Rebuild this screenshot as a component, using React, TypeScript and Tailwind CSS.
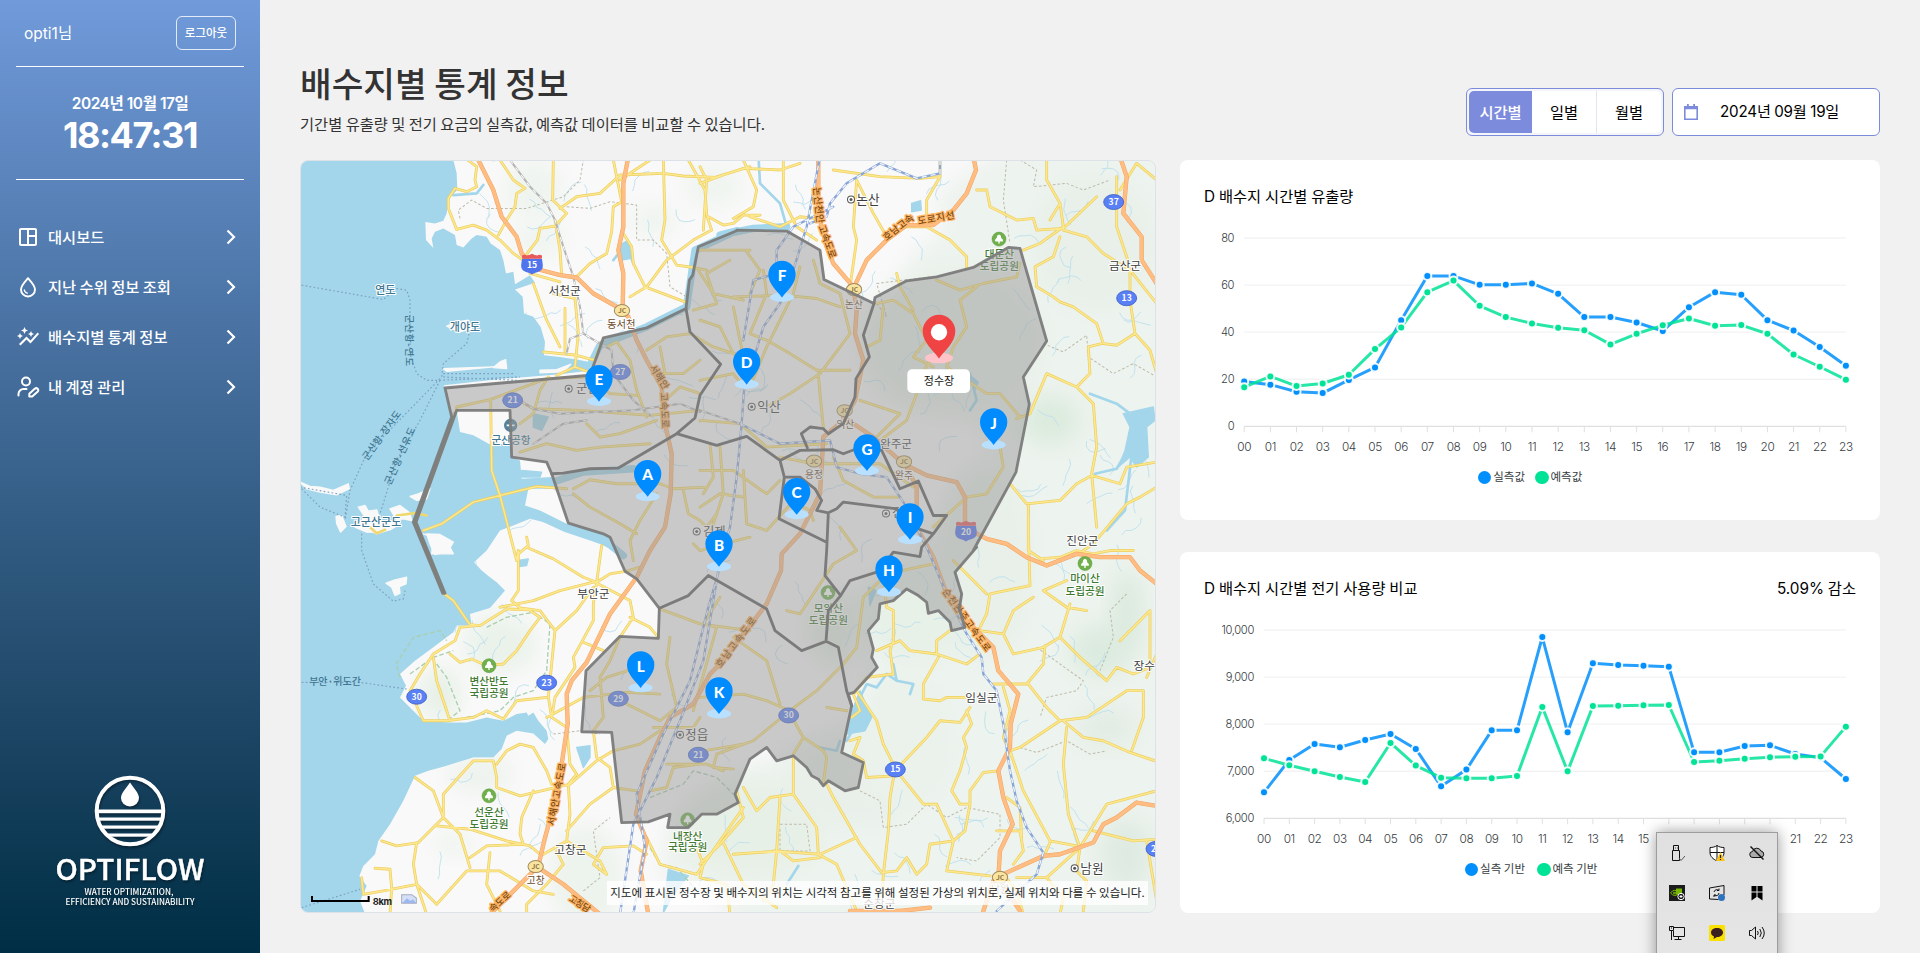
import React from "react";
import { MdAutoGraph, MdOutlineSpaceDashboard } from "react-icons/md";

const KR = "font-['Noto_Sans_CJK_KR',sans-serif]";
const MIX = "font-['Inter','Noto_Sans_CJK_KR',sans-serif]";

/* ---------- sidebar ---------- */

const DropIcon = () => (
  <svg viewBox="0 0 24 24" className="size-6" fill="none" stroke="currentColor" strokeWidth="1.9" strokeLinecap="round" strokeLinejoin="round">
    <path d="M12 3.2c-2.6 3-7 7.2-7 11.3a7 7 0 0 0 14 0C19 10.400 14.600 6.200 12 3.200z" />
    <path d="M8.300 14.800a3.700 3.700 0 0 0 3 3.300" strokeWidth="1.300" />
  </svg>
);

const UserEditIcon = () => (
  <svg viewBox="0 0 24 24" className="size-6" fill="none" stroke="currentColor" strokeWidth="2" strokeLinecap="round" strokeLinejoin="round">
    <circle cx="10" cy="6.500" r="4" />
    <path d="M2.500 20.500v-1.500a5 5 0 0 1 5-5h3" />
    <path d="M13.300 21.600v-2.800l5.700-5.200a2 2 0 0 1 2.800 2.800l-5.600 5.200z" />
  </svg>
);

const menu = [
  { label: "대시보드", icon: <MdOutlineSpaceDashboard className="size-6" /> },
  { label: "지난 수위 정보 조회", icon: <DropIcon /> },
  { label: "배수지별 통계 정보", icon: <MdAutoGraph className="size-6" /> },
  { label: "내 계정 관리", icon: <UserEditIcon /> },
];

const Logo = () => (
  <svg viewBox="0 0 160 140" className="h-[140px] w-[160px] drop-shadow-[1px_2px_1px_rgba(0,0,0,0.35)]">
    <defs>
      <clipPath id="disc"><circle cx="80" cy="40" r="34" /></clipPath>
    </defs>
    <circle cx="80" cy="40" r="33.300" fill="none" stroke="#fff" strokeWidth="4" />
    <path d="M80 11.500c-3.500 5.500-9 10.500-9 15.500a9 8.500 0 0 0 18 0c0-5-5.500-10-9-15.500z" fill="#fff" />
    <g clipPath="url(#disc)" fill="#fff">
      <rect x="45" y="38.500" width="70" height="3.700" />
      <rect x="45" y="46.500" width="70" height="3.200" />
      <rect x="45" y="54.500" width="70" height="3.200" />
      <rect x="45" y="62.500" width="70" height="3.200" />
    </g>
    <text x="80" y="108.500" textAnchor="middle" textLength="149" lengthAdjust="spacingAndGlyphs" fontFamily="'Noto Sans CJK KR'" fontWeight="500" fontSize="28" fill="#fff" stroke="#fff" strokeWidth=".4">OPTIFLOW</text>
    <text x="79" y="123.500" textAnchor="middle" textLength="89" lengthAdjust="spacingAndGlyphs" fontFamily="'Noto Sans CJK KR'" fontWeight="500" fontSize="8.500" fill="#fff">WATER OPTIMIZATION,</text>
    <text x="80" y="133.500" textAnchor="middle" textLength="129" lengthAdjust="spacingAndGlyphs" fontFamily="'Noto Sans CJK KR'" fontWeight="500" fontSize="8.500" fill="#fff">EFFICIENCY AND SUSTAINABILITY</text>
  </svg>
);

const Sidebar = () => (
  <aside className="flex h-full w-[260px] shrink-0 flex-col bg-linear-to-b from-[#709ada] to-[#002e44] px-4 text-white">
    <div className="flex h-[67px] items-center justify-between border-b border-white pr-2 pl-2">
      <span className={`${MIX} pt-[2px] text-[15.5px]`}>opti1님</span>
      <button className={`${KR} h-[34px] w-[60px] rounded-md border border-white/80 pb-px text-[11.5px] font-medium`}>로그아웃</button>
    </div>
    <div className="flex h-[113px] flex-col items-center border-b border-white pt-[25px]">
      <span className={`${MIX} text-[15.5px] leading-6 font-semibold tracking-[-0.45px]`}>2024년 10월 17일</span>
      <span className={`${MIX} -mt-[2px] text-[36px] leading-[42px] font-bold tracking-[-1.5px]`}>18:47:31</span>
    </div>
    <nav className="mt-8 flex flex-col">
      {menu.map((m) => (
        <a key={m.label} className="flex h-[50px] items-center pr-2">
          {m.icon}
          <span className={`${KR} ml-2 flex-1 pb-[2px] text-[15.300px] font-medium`}>{m.label}</span>
          <svg viewBox="0 0 10 16" className="h-4 w-[10px]" fill="none" stroke="currentColor" strokeWidth="2.200"><path d="M1.500 1.500 8 8l-6.500 6.500" /></svg>
        </a>
      ))}
    </nav>
    <div className="mt-auto mb-[42px] flex justify-center"><Logo /></div>
  </aside>
);

/* ---------- map ---------- */
/* Map units are thirds of a pixel; the sheet is split in four tiles a, b, c, d. */

type Tile = "a" | "b" | "c" | "d";
const origin: Record<Tile, [number, number]> = { a: [0, 0], b: [1200, 0], c: [0, 1110], d: [1200, 1110] };

const trace = (spec: string) => {
  let tile: Tile = "a";
  const out: string[] = [];
  for (const token of spec.trim().split(/\s+/)) {
    if (token.length === 1) {
      tile = token as Tile;
      continue;
    }
    const [x, y] = token.split(",").map(Number);
    out.push(`${x + origin[tile][0]} ${y + origin[tile][1]}`);
  }
  return "M" + out.join("L");
};

const land =
  "a 455,-20 470,40 472,90 445,115 440,160 430,182 405,190 376,186 378,240 400,264 395,235 405,215 430,205 465,225 470,255 490,262 515,235 530,225 560,230 572,250 600,270 610,300 618,340 640,335 645,372 665,360 690,345 705,368 645,388 668,410 672,460 700,470 722,500 735,545 732,585 780,590 830,598 868,605 860,632 780,642 615,655 432,675 450,760 470,750 480,815 520,825 570,852 632,850 635,890 660,900 665,955 755,950 765,985 685,985 675,1035 720,1050 800,1090 925,1125 960,1180 c 930,55 900,40 830,12 a 760,1092 690,1075 640,1095 c 600,0 560,60 522,95 545,120 570,140 590,155 615,180 570,232 510,250 515,285 470,285 460,305 400,350 345,390 300,430 318,465 300,500 345,545 370,570 450,575 500,575 560,560 610,570 650,550 680,545 685,555 700,545 715,570 740,600 745,625 735,640 700,608 650,600 620,615 605,655 580,680 520,680 430,708 385,720 345,735 310,810 270,880 235,930 225,970 190,1005 178,1035 200,1065 180,1110 200,1160 d 1400,1160 b 1400,-20";

const landPath = trace(land) + "Z";

const districts = trace(
  "a 435,683 870,645 910,533 1040,503 1158,445 1168,360 1178,345 1195,260 1310,212 b 110,210 260,213 360,270 372,358 522,430 525,412 620,362 710,350 820,322 925,262 960,265 1040,542 970,650 988,732 948,935 820,1170 d 830,50 765,125 785,190 778,235 795,290 755,300 750,275 715,240 685,248 680,215 655,195 620,175 580,210 540,220 535,265 505,300 520,355 515,380 532,410 462,485 445,490 455,525 425,665 490,695 475,770 435,780 385,750 370,765 355,745 335,735 320,710 280,675 230,690 200,650 150,685 105,790 115,815 50,850 5,850 c 1165,890 1103,890 1110,850 1045,873 965,875 935,605 845,603 858,420 960,317 1075,323 1078,233 1010,145 975,122 930,20 a 910,1120 805,1088 755,940 740,905 635,890 630,750 470,750 348,1085 435,1298 428,1298 340,1085 455,770"
) + "Z";

const borders = [
  "a 1158,445 1170,515 1262,612 1200,705 1185,773 1130,820 955,923 870,925 790,938 755,940",
  "a 1130,820 1250,855 b 140,828 240,900 300,870 400,868 430,880 470,865 545,870 600,985 655,962 700,1065 740,1065 700,1120 665,1160 660,1188 d 580,65 565,85 530,125 450,150 422,195 385,240 378,332 305,360 225,300 200,235 25,135 c 1165,195 1078,233",
  "b 522,430 490,525 508,590 468,655 465,710 430,790 385,820 370,805 330,800 304,820 322,862",
  "b 240,900 253,950 300,950 345,985 365,1020 350,1050 385,1057 410,1045 430,1025 590,1045 640,1100 700,1120",
  "b 253,950 237,1075 380,1145", "b 385,1057 380,1170 d 375,135 422,195", "d 378,332 415,350 440,480 455,525",
].map(trace);

const waters = [
  "a 865,625 900,555 1040,500 1160,440 1185,270 1310,212 b 60,225 160,205 260,200",
  "a 760,965 850,935 1000,925", "a 680,1050 800,1105 920,1145 c 970,75",
].map(trace);
const brooks = ["b 175,-20 180,70 240,130 260,200", "b 1170,700 1250,730 1290,760 1350,760", "b 1185,940 1250,925 1300,840 1275,1050 1220,1110", "d 580,400 590,450 560,430 530,470 500,460 480,500 490,540 440,630", "d 590,450 640,460 630,490", "d 295,1005 260,1060", "b 810,640 830,720 810,750", "a 460,105 530,100 550,75", "a 940,300 980,250 1000,310", "d 360,650 410,660 420,630"].map(trace);

const lakes = [
  "b 1270,760 1360,740 1365,780 1340,800 1345,890 1310,920 1290,890 1255,920 1275,870 1290,800", "d 460,530 480,480 515,560 495,600 440,610", "c 830,650 870,645 870,680 850,710", "b 635,130 662,122 664,150 635,155", "a 960,255 985,240 995,295 965,300", "c 1105,1015 1165,1035 1120,1090 1090,1145", "a 700,760 745,770 725,810 700,800", "b 810,645 835,665 825,690", "d 505,170 528,180 510,225", "a 665,930 725,935 720,950 665,950", "c 655,90 685,85 680,105 658,108",
].map((s) => trace(s) + "Z");

const islands = [
  "a 0,965 30,978 60,980 100,990 145,970 148,985 110,1003 60,995 20,985", "a 175,1040 195,1035 205,1052 230,1048 240,1080 270,1085 300,1090 270,1108 235,1115 200,1115 165,1100 180,1085 195,1070", "a 270,1045 300,1035 330,1058 335,1080 310,1075 290,1078", "a 108,1068 125,1065 138,1098 122,1115 110,1090", "a 580,622 600,605 617,598 620,625", "a 440,498 470,485 505,480 515,505 480,515", "a 720,630 770,628 812,612 790,635 720,638", "c 380,10 420,12 460,35 445,60 405,72 390,40", "c 258,158 285,148 320,140 318,160 298,168 300,188 285,195 275,170", "a 330,1008 355,1000 390,985 380,1015 350,1020", "c 210,0 260,0 230,10", "a 430,625 580,620 440,633", "a 370,1120 400,1130 395,1180 460,1180 440,1140 400,1130",
].map((s) => trace(s) + "Z");

const roads = [
  "a 490,-10 530,20 525,60 530,80 500,95 465,85 445,115 445,145 470,208 520,195 560,210 600,240 640,280 690,315",
  "a 600,0 640,60 675,85 650,100 645,140 620,180 595,225", "a 760,0 758,120 800,160 765,198 720,205 712,240 685,275 670,300",
  "a 780,145 830,110 900,100 960,45 1090,40 1150,48 1245,52 1350,20", "a 940,0 965,125 940,140 935,215 920,280 870,310 830,350",
  "a 1090,0 1095,180 1085,240 1115,290 1130,315 1180,322 b 20,330", "a 1165,0 1190,45 1215,90 1220,165 1235,210 1180,240 1100,300 1040,380 990,410",
  "a 1050,0 960,60", "a 1225,170 1270,195 1300,190 1330,165 1380,165 b 150,170 240,200 300,170 345,175",
  "a 970,220 995,260 1000,310 1035,380 1155,425", "a 765,180 780,270 785,345", "a 700,370 740,480 780,560", "a 795,445 795,575", "a 690,340 780,365",
  "a 760,400 825,415 835,520 825,620 770,645", "a 730,575 830,585 885,600 905,545", "a 825,620 880,640", "a 870,650 740,655 570,718 470,740",
  "a 572,718 575,930 600,1005 650,1200 c 655,60 655,180 635,210 660,232", "a 370,1110 425,1090 520,1025 710,978 800,985", "a 720,690 745,650", "a 660,790 700,760 720,690",
  "a 640,710 700,745 840,750 1050,765 1200,750", "a 660,875 740,850 830,870 900,860 1050,850", "a 860,790 900,830 960,820 1070,780", "a 920,560 950,545 990,600 1010,690 1040,770", "a 880,660 930,700 1010,705", "a 1170,520 1100,530 1040,570", "a 1080,560 1095,640 1150,640 1200,600", "a 1095,720 1140,680 1200,700",
  "a 820,985 870,958 950,970 1080,970 1120,985 1220,980", "a 820,1000 870,1040 960,1090 1010,1120", "a 1150,990 1165,1060 1200,1080 1220,1100 1250,1060", "a 1070,1000 1020,1080 990,1140 1000,1200", "a 1230,850 1240,950 1210,1000",
  "a 1195,270 1350,270 b 140,275 180,330 150,400", "a 1195,330 1240,400 1330,420 b 100,410 250,405 350,415 420,440", "a 1180,450 1250,430 b 20,340 90,300", "a 1170,520 1240,560 1330,590 b 100,440", "b 0,480 60,500 100,580 140,620", "b 190,330 200,400 150,520 200,540 270,580 350,630 450,630", "b 300,320 280,400 240,480 200,560 150,680", "b 340,300 360,370 420,400 450,520", "b 0,660 100,640 130,680", "b 450,520 360,640 270,700 200,740", "b 355,640 360,700 370,800", "b 480,720 600,760 530,830", "b 0,780 120,790 200,860 380,850",
  "b 0,70 70,45 130,25 240,30 300,10", "b 0,20 20,60 10,210", "b 130,0 170,90 160,140 100,175", "b 250,0 250,120 290,200 350,240", "b 400,30 540,50 660,55 720,50 720,0", "b 470,60 460,200 470,240 450,380", "b 470,60 520,160 560,230 620,200 680,200 750,240 800,290 800,325",
  "b 720,50 680,120 680,170", "b 830,90 860,90 870,140 950,180 1000,175 1010,210 1090,205 1190,110", "b 1040,0 1040,60 1080,130 1090,200 1020,250 970,270", "b 1250,50 1250,200 1290,320 1290,420 1305,520", "b 1080,130 1050,180", "b 1260,90 1310,10 1370,60", "b 1090,210 1160,230 1210,280 1290,330 1370,430", "b 1080,230 1060,290 1005,320 1010,380 1060,410 1080,425 1120,440 1190,490 1210,550 1250,555 1305,520 1350,570 1370,640", "b 1205,550 1165,560 1170,640 1130,680 1040,640 990,760 950,775",
  "b 1130,680 1180,730 1190,860 1175,940 1190,1100", "b 930,970 980,1030 1080,1020 1130,970 1175,945 1260,970 1280,920 1370,905", "b 985,1035 985,1170 d 985,60 1030,90", "b 1370,980 1320,1010 1280,1030 1180,1150 d 1150,60",
  "b 530,430 580,420 640,460 680,540 640,590 700,620", "b 640,450 600,380 590,340", "b 710,360 780,390 850,370 950,350 960,310", "b 830,380 780,420 800,500 760,560 740,620 770,640 860,700 900,700 960,770", "b 650,700 620,780 540,840", "b 550,440 540,540 500,560", "b 640,690 690,600", "b 900,860 910,920 860,1000 800,1010 700,1100", "b 240,960 200,1000 100,930 0,930", "b 240,890 340,910 540,910 640,980", "b 130,930 140,1090 200,1110 300,1000", "b 400,890 430,960 520,1010 600,1010", "b 420,1100 470,1170 d 400,100 300,250 260,240", "b 60,860 70,1000 30,1120", "b 270,1020 330,1050 340,1080", "b 0,1040 60,1000 130,1010",
  "c 680,20 685,45 655,70", "c 680,50 760,85 850,140 890,155 930,130 980,122 1020,110", "c 905,45 890,155 880,220 880,270 820,380 825,410 765,500 755,560 800,590", "c 600,230 700,210 780,180 880,155", "c 885,155 990,210 1000,260 960,320 930,390 900,440 910,560 880,600 890,680 930,710 940,770", "c 660,232 720,240 765,300 745,500 755,560", "c 765,300 830,240 880,170",
  "c 430,188 460,210 510,282 540,285 620,235 690,238", "c 530,285 480,290 465,330 400,370 360,430 330,480 370,570 440,570 520,560 560,540 610,565 650,510 740,500", "c 400,380 410,450 430,510 450,570", "c 690,240 720,260 690,300 650,360 610,400 560,405 515,385 480,395 450,370", "c 850,335 910,360", "c 740,560 850,500 980,485 1080,490", "c 990,260 1050,290 1075,320",
  "c 345,740 400,780 430,860 480,910 510,1010", "c 430,860 430,790 520,690 580,690 590,740 590,770 660,795 810,760 890,690 940,660", "c 590,700 620,660 660,640 700,650 740,720 755,760", "c 700,780 665,860 660,910 670,940", "c 800,590 810,700 830,730 805,760 810,850 800,930 730,970", "c 410,885 510,895 620,930 690,945 720,970", "c 940,770 870,820 800,900", "c 940,770 1010,780", "c 245,930 290,945 355,935 430,860", "c 350,935 340,1000 350,1060 410,1120 500,1020 600,1020 700,1080 760,1090", "c 510,980 560,945 670,940", "c 570,965 560,1060 600,1140", "c 185,1040 190,1090 250,1080 350,1060", "c 225,1012 270,1015 275,1070 270,1150", "c 800,930 900,990 920,1030 880,1000 910,950 1000,945 1040,970", "c 770,960 790,1000 740,1060 680,1120 680,1150", "c 350,1060 380,1150",
  "c 1080,235 1200,280 1350,300", "c 1110,320 1100,400 1130,530 1080,570 980,520", "c 1260,200 1210,280 1250,290 1180,540", "c 1080,600 1020,640 940,660", "c 1060,590 1180,590 1200,560", "c 1100,700 1220,700 1270,720", "c 1210,660 1330,640", "c 1050,780 1100,770 1120,710 1200,700", "c 1040,920 1080,1000 1190,1030 1260,930 1330,830", "c 1200,1040 1210,1000 1190,950", "c 870,480 920,440 1060,395", "c 1180,40 1200,60 1270,40 1350,20",
  "d 0,500 130,490 200,510 270,540 350,480 430,400 470,350 490,200 560,130 700,100", "d 265,540 310,620 370,660 380,680 370,760", "d 310,620 280,670", "d 270,540 160,630 50,670 40,710 100,715", "d 380,530 440,540", "d 100,320 200,390 240,520", "d 550,140 560,230 580,240 580,330 570,360 580,430 500,440 460,490", "d 600,330 530,360", "d 600,330 630,360 710,370 800,400 840,370", "d 710,370 710,330 750,300", "d 715,380 670,460 670,505 720,510 740,500 800,500",
  "d 470,480 530,570 550,640 590,720 670,820 710,820 760,930 740,1020", "d 585,715 570,800 565,900 550,1030 545,1140", "d 590,715 680,620 720,570 780,575 810,530", "d 800,540 815,580 790,620 800,650 780,720 755,780 780,820 810,820 810,780 850,725 895,720", "d 460,490 480,540 455,560", "d 450,630 480,620 460,670 490,690 500,740 585,735", "d 810,820 795,900 760,930 690,940 680,1000 650,1030 620,980 590,1020 545,1025 480,940 400,800 380,760", "d 470,920 360,970 220,960", "d 110,780 130,860 60,940 0,1000", "d 130,770 170,840 210,800 280,790 280,680", "d 240,800 230,960 220,1060 190,1110", "d 280,790 350,890 355,970 410,1000 470,1140", "d 100,970 240,960 280,990 360,980",
  "d 70,935 130,1060 230,1130", "d 1300,60 1230,60 1180,70 1130,60 1080,80 1020,85", "d 985,0 990,165 870,190 860,250 830,310", "d 760,90 860,190", "d 1100,150 1030,180 1100,230 1160,240", "d 1110,220 1080,320 1140,380 1220,450 1250,410 1300,430 1350,410 1350,240 1260,330", "d 840,300 910,310 940,370 1030,350 1080,320", "d 1035,345 1030,400 980,460 880,460", "d 910,310 940,240 1000,200", "d 985,460 1040,530 1080,570 1160,560 1220,520 1280,480 1330,480 1330,560 1295,660", "d 1080,570 960,650 930,660 970,780 1050,930 1130,945", "d 1090,570 1150,620 1210,630 1290,665 1365,690", "d 1100,590 1090,700 1105,850 1140,950 1130,1020", "d 1370,370 1340,440", "d 1370,780 1220,820 1140,950 1040,1040 950,1040", "d 1180,900 1300,930 1370,925", "d 1050,935 1030,980", "d 1340,930 1370,1110", "d 910,470 930,540 910,620 940,690", "d 890,900 960,900 970,960 940,1000", "d 1040,1040 1090,1100 1080,1150", "d 910,1030 950,1080 970,1150", "d 740,1020 870,1035", "d 1130,1020 1160,1050 1150,1140", "d 0,1040 80,1060 90,1150", "d 920,800 960,830 965,920",
].map(trace);

const highways = [
  "a 530,-10 580,90 605,170 650,230 665,280 705,325 780,345 830,352 880,400 960,445 985,470 1010,540 1040,600 1085,680 1095,790 1115,880 1112,1000 1095,1100 1050,1170 c 1010,140 930,250 860,395 815,450 800,490 803,580 785,700 760,830 735,920 715,1005 570,1150",
  "a 985,-10 970,70 970,200 955,270 970,340 968,445", "c 715,1010 790,1060 900,1150",
  "b 355,-10 355,160 380,260 400,310 460,380 470,450 465,520 490,600 465,720 430,780 370,830 360,1000 310,1100 300,1120 d 245,70 243,120 200,220 130,310 60,400 30,430 c 1180,520 1110,560 1080,620 1035,720 1008,850 1040,930 1022,1020 1045,1150",
  "b 820,-10 828,30 800,100 760,150 700,195 620,195 560,240 500,300 465,375", "b 430,770 520,830 610,910 680,945 770,965 795,1010 795,1100 860,1135 920,1150 980,1190 1040,1215 1130,1180 1200,1190 1290,1190 1320,1230 1370,1270",
  "b 1260,-10 1280,50 1270,160 1325,230 1325,300 1370,370", "b 620,920 650,980 650,1100 700,1190 d 740,190 800,270 880,350 895,420 955,490 932,580 930,650 895,720 910,800 938,880 900,960 895,1040 960,1140",
  "d 1370,825 1310,815 1250,860 1210,880 1180,935 1080,970 1030,975 920,1025 880,1050 850,1140", "d 450,1140 600,1140 690,1130",
].map(trace);

const rails = ["b 360,-10 320,200 280,330 240,430 190,500 160,600 135,650 125,790 110,950 90,1100 60,1200 40,1320 10,1500 -60,1680 -130,1850 -200,1990 -240,2260", "b 400,140 280,200 230,270 230,340 160,360 130,540", "b 720,0 720,40 650,55 540,10 440,70 390,130 380,170 330,190", "b 60,1220 25,1340 0,1440 -30,1560 -110,1720 -190,1900 -165,2060 -200,2260", "b 120,790 240,850 390,840 410,920 480,940 560,950 620,1040 680,1160 d 740,190 800,310 845,380 850,430 890,480 910,580 930,720 950,810 980,890 1030,965 1010,1030 890,1140"].map(trace);
const greyRails = ["a 630,0 690,80 740,130 765,180 790,260 820,350 840,440 850,520 900,550 935,570 940,640 1000,720 1050,765", "a 640,710 700,745 780,760 1000,750 1140,730 1200,755 b 0,750 120,790", "a 850,520 810,535 800,580", "a 700,850 790,790 860,780"].map(trace);

const trails = ["a 480,175 475,150 515,120 560,145 680,145 790,110 840,60 850,0", "a 800,140 870,145 930,125 1010,135 1010,240 1060,240 1100,280 1110,380 1160,410", "b 920,0 910,120 930,250", "b 960,0 1010,30 1000,80 1100,70 1150,90 1230,60", "b 1030,550 1090,575 1160,525 1165,590 1240,640 1300,610 1370,650", "d 1010,350 1080,400 1150,450 1130,480 1040,500 1020,560", "d 960,650 1010,665 1100,630 1170,670 1220,660", "d 480,780 540,810 550,890 620,880 680,820 740,860 800,830 900,850 900,920 830,990 770,980", "b 530,430 560,470 530,370 690,350", "d 240,880 320,880 330,960 240,960 240,890", "c 850,1080 900,1040 880,900 930,860", "c 760,610 840,600 900,610", "d 1280,190 1230,240 1240,320 1200,420"].map(trace);
const greenEdges = ["c 300,440 288,400 340,320 420,300 440,330", "c 560,290 620,260 700,245 750,280 740,420 700,480 640,500 600,540 500,560", "c 410,400 440,440 480,540 440,570", "c 1050,800 1150,760 1180,720 1250,740 1300,790", "c 1050,950 1080,1000 1130,1010 1190,1080", "c 330,430 400,380 460,360"].map(trace);
const ferries = ["a 5,375 250,418 290,385 320,390 330,420 330,580 350,640 380,660 420,660 660,650", "a 510,510 500,550 430,610 425,650", "a 420,655 200,880 150,990 135,1080", "a 420,660 360,780 290,900 240,1060", "a 5,985 60,1040 135,1070", "a 430,640 640,640", "a 430,650 650,660", "a 0,980 140,1005 135,1070", "a 185,1120 c 185,60 220,160 280,212 310,205 315,180", "c 5,455 180,455 320,475", "c 5,1130 180,1075"].map(trace);

const streams = (() => {
  let s = 7;
  const r = () => ((s = (s * 16807) % 2147483647) / 2147483647);
  return Array.from({ length: 190 }, () => {
    let x = 420 + r() * 2140;
    let y = r() * 2250;
    let t = r() * 6.28;
    let d = `M${x.toFixed(0)} ${y.toFixed(0)}`;
    for (let i = 0; i < 5; i++) {
      t += (r() - 0.5) * 1.6;
      x += Math.cos(t) * 17;
      y += Math.sin(t) * 17;
      d += `L${x.toFixed(0)} ${y.toFixed(0)}`;
    }
    return d;
  }).join("");
})();

const hills: [number, number, number, number, string][] = [
  [2250, 780, 90, 75, "#dcebde"], [2400, 1470, 90, 80, "#dcebdf"], [2480, 1360, 50, 130, "#dbeade"], [2420, 1700, 90, 60, "#e2ece4"], [2480, 2080, 80, 110, "#dfebe2"], [2050, 1200, 140, 300, "#e8f0e9"],
  [1950, 550, 280, 220, "#e8f0e8"], [2380, 250, 180, 200, "#e8f0e9"], [700, 90, 90, 90, "#eff4ef"], [720, 240, 80, 50, "#eff4ef"], [600, 1450, 110, 90, "#eaf2ea"], [420, 1600, 60, 80, "#e6f0e6"], [540, 1840, 100, 60, "#eef3ee"], [1060, 180, 70, 50, "#eff4ef"], [860, 2150, 110, 160, "#edf3ed"], [1350, 2000, 220, 150, "#e7f0e7"], [1650, 1850, 200, 150, "#e9f0ea"], [1600, 1400, 80, 120, "#e4eee4"], [1850, 1350, 180, 150, "#e7f1e8"], [1800, 1750, 150, 200, "#eaf2eb"], [1240, 80, 90, 60, "#eff4ef"], [460, 2050, 60, 40, "#eff4ef"],
];

type Label = { t: string; x: number; y: number; s?: number; c?: string; r?: number; k?: "halo" | "road" | "plain"; w?: number };
const SEA = "#3f7691";
const PARK = "#3f7a32";
const TXT = "#3c3c3c";
const labels: Label[] = [
  { t: "연도", x: 256, y: 400, s: 34, c: SEA }, { t: "개야도", x: 495, y: 511, s: 33, c: SEA }, { t: "고군산군도", x: 228, y: 1097, s: 33, c: SEA },
  { t: "군산항-연도", x: 328, y: 540, s: 29, c: SEA, r: 90, k: "plain", w: 155 }, { t: "군산항-장자도", x: 245, y: 825, s: 29, c: SEA, r: -54, k: "plain", w: 175 }, { t: "군산항-선유도", x: 300, y: 887, s: 29, c: SEA, r: -66, k: "plain", w: 185 },
  { t: "부안·위도간", x: 105, y: 1574, s: 30, c: SEA, k: "plain", w: 155 },
  { t: "서천군", x: 794, y: 403, s: 35, c: TXT }, { t: "동서천", x: 964, y: 503, s: 31, c: "#6b4a2b" }, { t: "군산", x: 862, y: 698, s: 37, c: TXT }, { t: "군산공항", x: 633, y: 851, s: 32, c: SEA },
  { t: "김제", x: 1243, y: 1127, s: 37, c: TXT }, { t: "논산", x: 1704, y: 131, s: 38, c: TXT }, { t: "논산", x: 1662, y: 442, s: 29, c: "#6b4a2b" }, { t: "익산", x: 1407, y: 752, s: 38, c: TXT }, { t: "익산", x: 1636, y: 803, s: 29, c: "#6b4a2b" },
  { t: "용정", x: 1542, y: 953, s: 29, c: "#6b4a2b" }, { t: "완주", x: 1812, y: 955, s: 29, c: "#6b4a2b" }, { t: "완주군", x: 1788, y: 863, s: 35, c: TXT }, { t: "전주", x: 1810, y: 1071, s: 37, c: TXT },
  { t: "대둔산", x: 2098, y: 293, s: 32, c: PARK }, { t: "도립공원", x: 2098, y: 331, s: 32, c: PARK }, { t: "금산군", x: 2475, y: 329, s: 35, c: TXT }, { t: "진안군", x: 2347, y: 1154, s: 35, c: TXT },
  { t: "마이산", x: 2355, y: 1264, s: 32, c: PARK }, { t: "도립공원", x: 2355, y: 1303, s: 32, c: PARK }, { t: "모악산", x: 1585, y: 1354, s: 32, c: PARK }, { t: "도립공원", x: 1585, y: 1391, s: 32, c: PARK },
  { t: "장수", x: 2533, y: 1528, s: 35, c: TXT }, { t: "임실군", x: 2044, y: 1625, s: 35, c: TXT }, { t: "남원", x: 2376, y: 2136, s: 38, c: TXT }, { t: "남원", x: 2100, y: 2197, s: 29, c: "#6b4a2b" }, { t: "순창군", x: 1738, y: 2242, s: 35, c: TXT },
  { t: "부안군", x: 880, y: 1312, s: 35, c: TXT }, { t: "변산반도", x: 567, y: 1574, s: 32, c: PARK }, { t: "국립공원", x: 567, y: 1610, s: 32, c: PARK }, { t: "선운산", x: 567, y: 1964, s: 32, c: PARK }, { t: "도립공원", x: 567, y: 2000, s: 32, c: PARK },
  { t: "내장산", x: 1163, y: 2036, s: 32, c: PARK }, { t: "국립공원", x: 1163, y: 2071, s: 32, c: PARK }, { t: "고창군", x: 811, y: 2080, s: 35, c: TXT }, { t: "고창", x: 707, y: 2168, s: 29, c: "#6b4a2b" }, { t: "정읍", x: 1190, y: 1736, s: 38, c: TXT },
  { t: "논산천안", x: 1555, y: 135, s: 29, c: "#7c4a12", r: 84, k: "road", w: 108 }, { t: "고속도로", x: 1582, y: 245, s: 29, c: "#7c4a12", r: 70, k: "road", w: 104 },
  { t: "호남고속", x: 1795, y: 202, s: 29, c: "#7c4a12", r: -38, k: "road", w: 108 }, { t: "도로지선", x: 1908, y: 174, s: 29, c: "#7c4a12", r: -10, k: "road", w: 112 },
  { t: "서해안", x: 1078, y: 650, s: 28, c: "#7c4a12", r: 58, k: "road", w: 80 }, { t: "고속도로", x: 1094, y: 750, s: 28, c: "#7c4a12", r: 87, k: "road", w: 106 }, { t: "서해안고속도로", x: 770, y: 1900, s: 28, c: "#7c4a12", r: -79, k: "road", w: 190 },
  { t: "호남고속도로", x: 1308, y: 1445, s: 28, c: "#7c4a12", r: -53, k: "road", w: 180 }, { t: "순천완주고속도로", x: 2000, y: 1378, s: 28, c: "#7c4a12", r: 54, k: "road", w: 225 }, { t: "속도로", x: 600, y: 2222, s: 28, c: "#7c4a12", r: -42, k: "road", w: 76 }, { t: "고창담", x: 840, y: 2228, s: 28, c: "#7c4a12", r: 32, k: "road", w: 70 },
];

const shields: [number, number, string][] = [[961, 635, "27"], [638, 720, "21"], [2441, 126, "37"], [2480, 414, "13"], [740, 1566, "23"], [350, 1608, "30"], [955, 1614, "29"], [1195, 1782, "21"], [1466, 1664, "30"], [1786, 1826, "15"], [2568, 2064, "24"]];
const jcs: [number, number][] = [[966, 451], [1662, 388], [1634, 751], [1542, 902], [1812, 904], [707, 2117], [2100, 2149]];
const parks: [number, number][] = [[2097, 237], [2355, 1209], [1584, 1296], [567, 1515], [567, 1905], [1163, 1977]];
const cities: [number, number][] = [[1653, 118], [1355, 739], [806, 685], [1190, 1113], [1140, 1722], [2324, 2122], [1758, 1059]];
const pins: [string, number, number][] = [["F", 1446, 410], ["D", 1340, 671], ["E", 897, 722], ["A", 1043, 1007], ["C", 1490, 1061], ["G", 1701, 930], ["I", 1830, 1136], ["J", 2081, 852], ["B", 1257, 1217], ["H", 1767, 1293], ["L", 1022, 1580], ["K", 1257, 1658]];

const Lines = ({ d, ...p }: { d: string[] } & Omit<React.SVGProps<SVGPathElement>, "d">) => <path d={d.join("")} fill="none" strokeLinejoin="round" strokeLinecap="round" {...p} />;

const Interstate = ({ x, y, n }: { x: number; y: number; n: string }) => (
  <g transform={`translate(${x} ${y})`}>
    <path d="M-30-16h60c0 8 4 18 2 26C28 24 14 22 0 31-14 22-28 24-32 10-34 2-30-8-30-16z" fill="#4f74ee" />
    <path d="M-30-20v-6q8-4 14 0 8 0 16-5 8 5 16 5 6-4 14 0v6l-2 4h-56z" fill="#e85a5a" />
    <text y="12" textAnchor="middle" fontSize="26" fontWeight="700" fill="#fff">{n}</text>
  </g>
);

const MapSheet = () => (
  <svg viewBox="3 3 2562 2250" preserveAspectRatio="none" className="h-full w-full" fontFamily="'Noto Sans CJK KR', sans-serif">
    <defs>
      <clipPath id="coast"><path d={landPath} /></clipPath>
      <filter id="soft" x="-30%" y="-30%" width="160%" height="160%"><feGaussianBlur stdDeviation="34" /></filter>
    </defs>
    <rect width="2580" height="2270" fill="#a3d6eb" />
    <path d={landPath} fill="#f9f9f9" />
    <g clipPath="url(#coast)">
      <path d={trace("b 620,300 740,200 700,120 850,0 1000,-60 1500,-60 d 1500,1240 150,1240 50,1100 c 1080,1050 1100,900 d 150,700 500,600 480,200 b 700,1100 880,900 600,420") + "Z"} fill="#edf3ee" filter="url(#soft)" />
      {hills.map(([x, y, rx, ry, c], i) => <ellipse key={i} cx={x} cy={y} rx={rx} ry={ry} fill={c} filter="url(#soft)" />)}
      <path d={streams} fill="none" stroke="#b9deed" strokeWidth="2.500" strokeLinejoin="round" />
    </g>
    {islands.map((d, i) => <path key={i} d={d} fill="#f9f9f9" stroke="#f9f9f9" strokeWidth="4" strokeLinejoin="round" />)}
    <Lines d={waters} stroke="#a3d6eb" strokeWidth="22" />
    <Lines d={brooks} stroke="#a3d6eb" strokeWidth="8" />
    {lakes.map((d, i) => <path key={i} d={d} fill="#a3d6eb" stroke="#a3d6eb" strokeWidth="4" strokeLinejoin="round" />)}
    <Lines d={trails} stroke="#bdbbaa" strokeWidth="3" strokeDasharray="8 6" strokeLinecap="butt" />
    <Lines d={greenEdges} stroke="#a9cfae" strokeWidth="4" strokeDasharray="14 7" strokeLinecap="butt" />
    <Lines d={ferries} stroke="#7c9fc0" strokeWidth="3.500" strokeDasharray="5 7" strokeLinecap="butt" />
    <Lines d={roads} stroke="#ecce62" strokeWidth="8.500" />
    <Lines d={roads} stroke="#fde88d" strokeWidth="4.500" />
    <Lines d={["M430 1298L345 1085L470 745", "M290 1065L345 1058L380 1065", "M210 1100L230 1118L255 1108"]} stroke="#f0d870" strokeWidth="8" />
    <Lines d={greyRails} stroke="#b4b4b4" strokeWidth="6" />
    <Lines d={greyRails} stroke="#fff" strokeWidth="3" strokeDasharray="14 14" strokeLinecap="butt" />
    <Lines d={highways} stroke="#f1a55e" strokeWidth="13" />
    <Lines d={highways} stroke="#ffbd83" strokeWidth="10" />
    <Lines d={rails} stroke="#8aa6d6" strokeWidth="7" />
    <Lines d={rails} stroke="#f0f4fb" strokeWidth="4" strokeDasharray="15 12" strokeLinecap="butt" />
    {jcs.map(([x, y], i) => (
      <g key={i}>
        <ellipse cx={x} cy={y} rx="23" ry="18" fill="#fbe3a0" stroke="#a08a5c" strokeWidth="3" />
        <text x={x} y={y + 8} textAnchor="middle" fontSize="20" fontWeight="700" fill="#8a7440">JC</text>
      </g>
    ))}
    {shields.map(([x, y, n], i) => (
      <g key={i}>
        <ellipse cx={x} cy={y} rx="30" ry="22.500" fill="#5a80f5" stroke="#3d5fc4" strokeWidth="2.500" />
        <text x={x} y={y + 9} textAnchor="middle" fontSize="26" fontWeight="700" fill="#fff">{n}</text>
      </g>
    ))}
    <Interstate x={696} y={312} n="15" />
    <Interstate x={1998} y={1112} n="20" />
    {parks.map(([x, y], i) => (
      <g key={i} transform={`translate(${x} ${y})`}>
        <circle r="21" fill="#6fb04c" stroke="#5c9a3d" strokeWidth="1.500" />
        <path d="M0-14c7 3 7 8 6 10 6 4 7 9 5 11H2v6h-4V7h-9c-2-2-1-7 5-11-1-2-1-7 6-10z" fill="#fff" />
      </g>
    ))}
    <g><circle cx="632" cy="795" r="20" fill="#56819a" /><path d="M620 795h24M632 785v20" stroke="#fff" strokeWidth="5" /></g>
    {cities.map(([x, y], i) => <g key={i}><circle cx={x} cy={y} r="10.500" fill="#fff" stroke="#555" strokeWidth="3" /><circle cx={x} cy={y} r="4.500" fill="#555" /></g>)}
    {labels.map((l, i) => (
      <text key={i} transform={`translate(${l.x} ${l.y}) rotate(${l.r ?? 0})`} dy={l.r ? 10 : 0} textAnchor="middle" fontSize={l.s} fontWeight={l.k === "road" || l.c === PARK || l.c === SEA ? 500 : 400} fill={l.c}
        textLength={l.w} stroke={l.k === "plain" ? "none" : l.k === "road" ? "#ffb668" : "#fff"} strokeWidth={l.k === "road" ? 8 : 6} strokeLinejoin="round" paintOrder="stroke">{l.t}</text>
    ))}
    <path d={districts} fill="#999" fillOpacity=".5" stroke="#7b7b7b" strokeWidth="8.500" strokeLinejoin="round" strokeOpacity=".95" />
    <Lines d={borders} stroke="#7b7b7b" strokeWidth="8.500" />
    {pins.map(([t, x, y]) => (
      <g key={t} transform={`translate(${x} ${y + 1})`}>
        <ellipse rx="36" ry="14" fill="#b9e0ff" />
        <path d="M0 1C-14-18-41-40-41-68a41 41 0 0 1 82 0C41-40 14-18 0 1z" fill="#008cff" />
        <text y="-48" textAnchor="middle" fontFamily="Lato, sans-serif" fontWeight="900" fontSize="46" fill="#fff">{t}</text>
      </g>
    ))}
    <g transform="translate(1917 593)">
      <ellipse rx="42" ry="16" fill="#ffc4c9" />
      <path d="M0 2C-16-22-49-46-49-80a49 49 0 0 1 98 0C49-46 16-22 0 2z" fill="#f04444" />
      <circle cy="-77" r="24.500" fill="#fff" />
      <rect x="-95" y="34" width="188" height="71" rx="14" fill="#fff" />
      <text x="0" y="81" textAnchor="middle" fontSize="33" fill="#111">정수장</text>
    </g>
    <path d="M36 2205v15h170v-15" fill="none" stroke="#000" strokeWidth="6" />
    <text x="218" y="2231" fontFamily="Inter, sans-serif" fontWeight="700" fontSize="28" textLength="58" fill="#222">8km</text>
    <g fill="#d5e0f8" stroke="#a5abbd" strokeWidth="3"><path d="M305 2201h30l14 10v16h-44z" /><path d="M307 2226l14-14 10 8 8-5 9 11z" fill="#9db8ee" stroke="none" /></g>
  </svg>
);

const MapPanel = () => (
  <section className="relative h-[753px] w-[856px] shrink-0 overflow-hidden rounded-lg border border-[#dde1e8]">
    <MapSheet />
    <div className={`${KR} absolute right-[7px] bottom-[7px] flex h-[24px] w-[541px] items-center justify-center bg-white/80 text-[11.5px] whitespace-nowrap text-[#222]`}>
      지도에 표시된 정수장 및 배수지의 위치는 시각적 참고를 위해 설정된 가상의 위치로, 실제 위치와 다를 수 있습니다.
    </div>
  </section>
);

/* ---------- charts ---------- */

type Series = { name: string; color: string; data: number[] };
type ChartProps = { series: Series[]; min: number; max: number; step: number; left: number; legendGap: number };

const TOP = 10;
const HEIGHT = 188.300;
const RIGHT = 665.900;

const LineChart = ({ series, min, max, step, left }: ChartProps) => {
  const px = (i: number) => left + ((RIGHT - left) * i) / 23;
  const py = (v: number) => TOP + HEIGHT * (1 - (v - min) / (max - min));
  const ticks = Array.from({ length: (max - min) / step + 1 }, (_, i) => min + i * step);
  return (
    <svg viewBox="0 0 700 226" className="block h-[226px] w-[700px]" fontFamily="Inter, 'Noto Sans CJK KR', sans-serif" fontWeight="300">
      {ticks.map((t) => (
        <g key={t}>
          <path d={`M${left} ${py(t)}H${RIGHT}`} stroke={t === min ? "#e0e0e0" : "#f3f3f3"} strokeWidth="1.300" />
          <text x={left - 10} y={py(t) + 4} textAnchor="end" fontSize="11.200" letterSpacing="-.35" fill="#373d3f">{t.toLocaleString("en-US")}</text>
        </g>
      ))}
      {Array.from({ length: 24 }, (_, i) => (
        <g key={i}>
          <path d={`M${px(i)} ${py(min)}v6`} stroke="#e0e0e0" />
          <text x={px(i)} y="222.500" textAnchor="middle" fontSize="11.800" letterSpacing="-.4" fill="#373d3f">{String(i).padStart(2, "0")}</text>
        </g>
      ))}
      {series.map((s) => (
        <path key={s.name} d={"M" + s.data.map((v, i) => `${px(i)} ${py(v)}`).join("L")} fill="none" stroke={s.color} strokeOpacity=".85" strokeWidth="3" strokeLinejoin="round" />
      ))}
      {series.map((s) => s.data.map((v, i) => <circle key={s.name + i} cx={px(i)} cy={py(v)} r="4" fill={s.color} stroke="#fff" strokeOpacity=".9" strokeWidth="2" />))}
    </svg>
  );
};

const flow: Series[] = [
  { name: "실측값", color: "#008FFB", data: [19, 17.7, 14.7, 14.1, 19.7, 25, 45.1, 63.9, 63.9, 60.1, 60.1, 60.7, 56.3, 46.4, 46.4, 44.1, 40.5, 50.6, 57, 55.9, 45.1, 40.7, 33.7, 25.7] },
  { name: "예측값", color: "#00E396", data: [16.6, 21.2, 17.1, 18.2, 21.9, 32.8, 42, 57, 61.9, 51.2, 46.4, 43.7, 41.9, 40.8, 34.8, 39.3, 42.9, 45.8, 42.7, 43, 39.3, 30.5, 25.3, 19.8] },
];
const power: Series[] = [
  { name: "실측 기반", color: "#008FFB", data: [6552, 7239, 7579, 7508, 7664, 7791, 7473, 6680, 7034, 7869, 7869, 9851, 7827, 9292, 9257, 9243, 9221, 7402, 7402, 7536, 7550, 7366, 7288, 6835] },
  { name: "예측 기반", color: "#00E396", data: [7274, 7126, 6998, 6878, 6772, 7600, 7119, 6864, 6850, 6850, 6899, 8365, 6998, 8386, 8393, 8402, 8407, 7196, 7225, 7267, 7296, 7310, 7315, 7947] },
];

const ChartCard = ({ title, note, ...chart }: ChartProps & { title: string; note?: string }) => (
  <section className="flex h-[360px] w-[700px] flex-col rounded-lg bg-white pt-[21px] last:h-[361px]">
    <div className={`${MIX} flex h-8 items-center justify-between px-6 text-[15.300px] text-black [word-spacing:-0.4px]`}>
      <h2>{title}</h2>
      {note && <span>{note}</span>}
    </div>
    <div className="mt-[15px]"><LineChart {...chart} /></div>
    <div className={`${KR} mt-[13px] flex items-center justify-center text-[11.500px] text-[#373d3f]`} style={{ gap: chart.legendGap, paddingLeft: chart.legendGap - 10 }}>
      {chart.series.map((s) => (
        <span key={s.name} className="flex h-5 items-center gap-[2px]"><i className="mt-px size-[13.500px] shrink-0 rounded-full" style={{ background: s.color }} />{s.name}</span>
      ))}
    </div>
  </section>
);

/* ---------- header controls ---------- */

const Controls = () => (
  <div className="flex gap-2">
    <div className={`${KR} flex h-12 w-[198px] rounded-md border border-[#7d8bdd] bg-[#f4f5fa] p-[2px] text-[15.3px] text-black`}>
      <div className="flex flex-1 overflow-hidden rounded-[5px]">
        <button className="w-[63px] bg-[#7d8bdd] pb-[2px] font-medium text-white">시간별</button>
        <button className="flex-1 bg-white pb-[2px]">일별</button>
        <button className="flex-1 border-l border-[#e3e5ee] bg-white pb-[2px]">월별</button>
      </div>
    </div>
    <div className={`${MIX} flex h-12 w-[208px] items-center rounded-md border border-[#7d8bdd] bg-white pl-[11px] text-[15.200px] text-black`}>
      <svg viewBox="0 0 14 16" className="h-4 w-[14px]"><path d="M3 0h1.800v2h4.400V0H11v2h3v14H0V2h3zM1.600 5.200v9.200h10.800V5.200z" fill="#7d8bdd" fillRule="evenodd" /></svg>
      <span className="ml-[22px] pt-px tracking-[-0.2px] [word-spacing:-0.5px]">2024년 09월 19일</span>
    </div>
  </div>
);

/* ---------- system tray flyout ---------- */

const trayIcons = [
  <g key="usb" fill="none" stroke="#111"><path d="M3.500 5.500h7v10h-7zM4.500.500h5v5h-5zM6 3h.700M8 3h.700" /><path d="M10 13l2 2.500 4-4.500" stroke="#555" /></g>,
  <g key="shield"><path d="M8 .500c2 1.500 4.500 2 7 2v5c0 4-3 6.500-7 8.500-4-2-7-4.500-7-8.500v-5c2.500 0 5-.500 7-2zM8 .500V16M1 7.500h14" fill="#fff" stroke="#111" /><path d="M11.500 7l4.500 9H7z" fill="#fdc21a" /><path d="M11.500 10v3M11.500 14v1" stroke="#222" strokeWidth="1.200" /></g>,
  <g key="cloud" fill="#aaa" stroke="#111"><path d="M4 12.500a3 3 0 0 1-.500-6 4.500 4.500 0 0 1 8.500-.500 3.300 3.300 0 0 1 0 6.500z" /><path d="M1.500 1.500l13 13" strokeWidth="1.400" /></g>,
  <g key="gpu"><rect width="16" height="16" fill="#1c1c1c" /><path d="M7 3.500h6v6H7z" fill="#76b900" /><path d="M1.500 8q4-5.500 8.500 0-4 5-8.500 0zM4 8q2-2 4 0-2 2-4 0z" fill="none" stroke="#76b900" /><circle cx="12" cy="11.500" r="3.200" fill="#1c1c1c" stroke="#fff" /><path d="M10.500 11.500h3M12 10v3" stroke="#fff" /></g>,
  <g key="sync" fill="none" stroke="#111"><path d="M.500 3l14.500-2.500V10M.500 3v11l9 .500" /><path d="M5 7a3 3 0 0 1 5-1.500M10 3.500v2H8M10 8a3 3 0 0 1-5 2M5 12v-2h2" /><circle cx="12.500" cy="12.500" r="3.500" fill="#2f72bd" stroke="none" /></g>,
  <g key="mark" fill="#000"><path d="M2.500 1h5v5.500h-5zM8.500 1h5v5.500h-5zM2.500 7.500h5V12l-5 3.500zM8.500 7.500h5v8l-5-3.500z" /></g>,
  <g key="net" fill="none" stroke="#111"><path d="M5 2.500h10.500v9H4.500V6M9.500 11.500v3M5.500 14.500h7M.500 1.500h4v4h-4zM2.500 5.500v9.500" /><path d="M2 3h1" /></g>,
  <g key="talk"><rect width="16" height="16" rx="1.500" fill="#fae100" /><path d="M8 3c3.500 0 6 2 6 4.500S11.500 12 8 12l-3.500 2 .500-2.500C3.200 10.800 2 9.500 2 7.500 2 5 4.500 3 8 3z" fill="#3b1e1e" /></g>,
  <g key="vol" fill="none" stroke="#111"><path d="M.500 5.500h2L6.500 2v12l-4-3.500h-2z" /><path d="M8.500 6q1.500 2 0 4M10.800 4q3 4 0 8M13 2q4.500 6 0 12" /></g>,
];

const Tray = () => (
  <div className="absolute top-[832px] left-[1656px] grid h-[140px] w-[122px] auto-rows-[40px] grid-cols-3 border border-[#9d9d9d] bg-linear-to-b from-[#e0e0e0] to-[#e6e6e6] shadow-[0_0_14px_rgba(0,0,0,0.4)]">
    {trayIcons.map((ic, i) => (
      <span key={i} className="flex items-center justify-center"><svg viewBox="0 0 16 16" className="size-4">{ic}</svg></span>
    ))}
  </div>
);

export default function App() {
  return (
    <div className="relative flex h-[953px] w-[1920px] overflow-hidden bg-[#f1f1f1]">
      <Sidebar />
      <main className="flex flex-1 flex-col px-10">
        <header className="flex h-[160px] items-end justify-between pb-6">
          <div className={KR}>
            <h1 className="text-[34.400px] leading-[50px] font-medium text-[#333]">배수지별 통계 정보</h1>
            <p className="mt-[4px] mb-px text-[15.300px] leading-6 text-[#333]">기간별 유출량 및 전기 요금의 실측값, 예측값 데이터를 비교할 수 있습니다.</p>
          </div>
          <Controls />
        </header>
        <div className="flex items-start gap-6">
          <MapPanel />
          <div className="flex flex-col gap-[32px]">
            <ChartCard title="D 배수지 시간별 유출량" series={flow} min={0} max={80} step={20} left={64.200} legendGap={10} />
            <ChartCard title="D 배수지 시간별 전기 사용량 비교" note="5.09% 감소" series={power} min={6000} max={10000} step={1000} left={84} legendGap={12} />
          </div>
        </div>
      </main>
      <Tray />
    </div>
  );
}
